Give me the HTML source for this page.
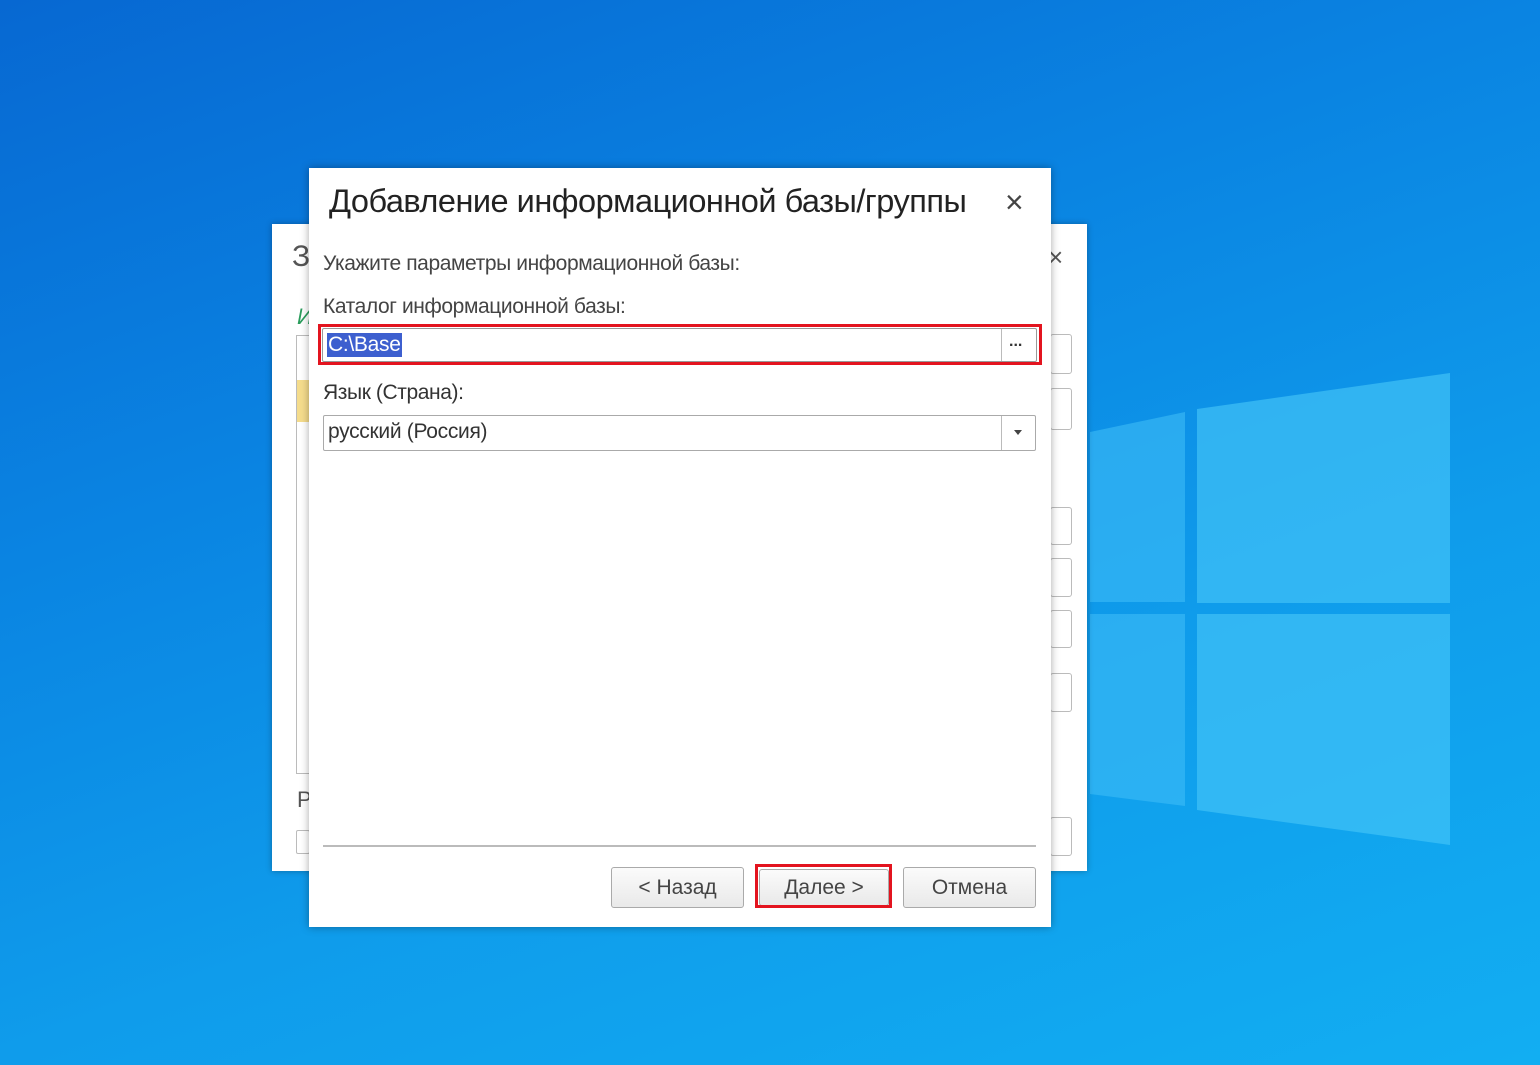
<!DOCTYPE html>
<html><head><meta charset="utf-8"><style>
*{margin:0;padding:0;box-sizing:border-box}
body{width:1540px;height:1065px;overflow:hidden;position:relative;font-family:"Liberation Sans",sans-serif;
background:linear-gradient(160deg,#0768d2 0%,#0a84e2 35%,#0f9ceb 65%,#12aef2 100%);}
.abs{position:absolute}
.back{left:272px;top:224px;width:815px;height:647px;background:#fff;box-shadow:0 0 6px rgba(0,0,0,.3)}
.bb{position:absolute;left:1050px;width:22px;background:#fff;border:1px solid #bbb;border-radius:3px}
.dlg{left:309px;top:168px;width:742px;height:759px;background:#fff;box-shadow:0 0 8px rgba(0,0,0,.35);color:#333}
.lbl{position:absolute;left:14px;font-size:21px;color:#444;letter-spacing:-0.4px}
.field{position:absolute;left:14px;width:713px;height:36px;border:1px solid #aaa;border-radius:2px;background:#fff}
.btn{position:absolute;top:699px;height:41px;border:1px solid #aaa;border-radius:3px;background:linear-gradient(#fbfbfb,#e9e9e9);font-size:21px;color:#444;text-align:center;line-height:39px}
</style></head><body>
<svg class="abs" style="left:0;top:0" width="1540" height="1065">
<polygon points="1090,432 1185,412 1185,602 1090,602" fill="#3ebdf6" opacity=".6"/>
<polygon points="1197,409 1450,373 1450,603 1197,603" fill="#45c4f8" opacity=".65"/>
<polygon points="1090,614 1185,614 1185,806 1090,794" fill="#3ebdf6" opacity=".6"/>
<polygon points="1197,614 1450,614 1450,845 1197,810" fill="#45c4f8" opacity=".65"/>
</svg>
<div class="abs back">
 <div class="abs" style="left:20px;top:16px;font-size:30px;color:#555">З</div>
 <div class="abs" style="left:776px;top:18px;font-size:26px;color:#555">×</div>
 <div class="abs" style="left:25px;top:80px;font-size:22px;color:#2a9d5c;font-style:italic">И</div>
 <div class="abs" style="left:24px;top:111px;width:14px;height:439px;border:1px solid #bbb"></div>
 <div class="abs" style="left:25px;top:156px;width:12px;height:42px;background:#f5dc8c"></div>
 <div class="abs" style="left:25px;top:563px;font-size:22px;color:#555">Р</div>
 <div class="abs" style="left:24px;top:606px;width:14px;height:24px;border:1px solid #bbb;border-radius:2px"></div>
</div>
<div class="bb" style="top:334px;height:40px"></div>
<div class="bb" style="top:388px;height:42px"></div>
<div class="bb" style="top:507px;height:38px"></div>
<div class="bb" style="top:558px;height:39px"></div>
<div class="bb" style="top:610px;height:38px"></div>
<div class="bb" style="top:673px;height:39px"></div>
<div class="bb" style="top:817px;height:39px"></div>
<div class="abs dlg">
 <div class="abs" style="left:20px;top:15px;font-size:32.5px;color:#222;letter-spacing:-0.5px">Добавление информационной базы/группы</div>
 <div class="abs" style="left:696px;top:16px;font-size:32px;color:#444;font-weight:300">×</div>
 <div class="lbl" style="top:84px">Укажите параметры информационной базы:</div>
 <div class="lbl" style="top:127px">Каталог информационной базы:</div>
 <div class="abs" style="left:9px;top:156px;width:724px;height:41px;border:3px solid #e3141f"></div>
 <div class="field" style="top:160px;left:13px;width:715px;height:34px;border-color:#999">
  <span class="abs" style="left:4px;top:4px;background:#3d5fcf;color:#fff;font-size:21px;line-height:24px;padding:0 1px;letter-spacing:-0.3px">C:\Base</span>
  <div class="abs" style="left:678px;top:0;width:1px;height:32px;background:#bbb"></div>
  <div class="abs" style="left:686px;top:4px;font-size:16px;color:#333;font-weight:bold">...</div>
 </div>
 <div class="lbl" style="top:213px;color:#333">Язык (Страна):</div>
 <div class="field" style="top:247px">
  <span class="abs" style="left:4px;top:4px;font-size:21px;color:#333;letter-spacing:-0.3px">русский (Россия)</span>
  <div class="abs" style="left:677px;top:0;width:1px;height:34px;background:#bbb"></div>
  <div class="abs" style="left:690px;top:14px;width:0;height:0;border-left:4px solid transparent;border-right:4px solid transparent;border-top:5px solid #444"></div>
 </div>
 <div class="abs" style="left:14px;top:677px;width:713px;height:2px;background:#bbb"></div>
 <div class="btn" style="left:302px;width:133px">&lt; Назад</div>
 <div class="btn" style="left:450px;width:130px;top:701px;height:37px;line-height:35px">Далее &gt;</div>
 <div class="abs" style="left:446px;top:696px;width:137px;height:44px;border:3px solid #e3141f"></div>
 <div class="btn" style="left:594px;width:133px">Отмена</div>
</div>
</body></html>
